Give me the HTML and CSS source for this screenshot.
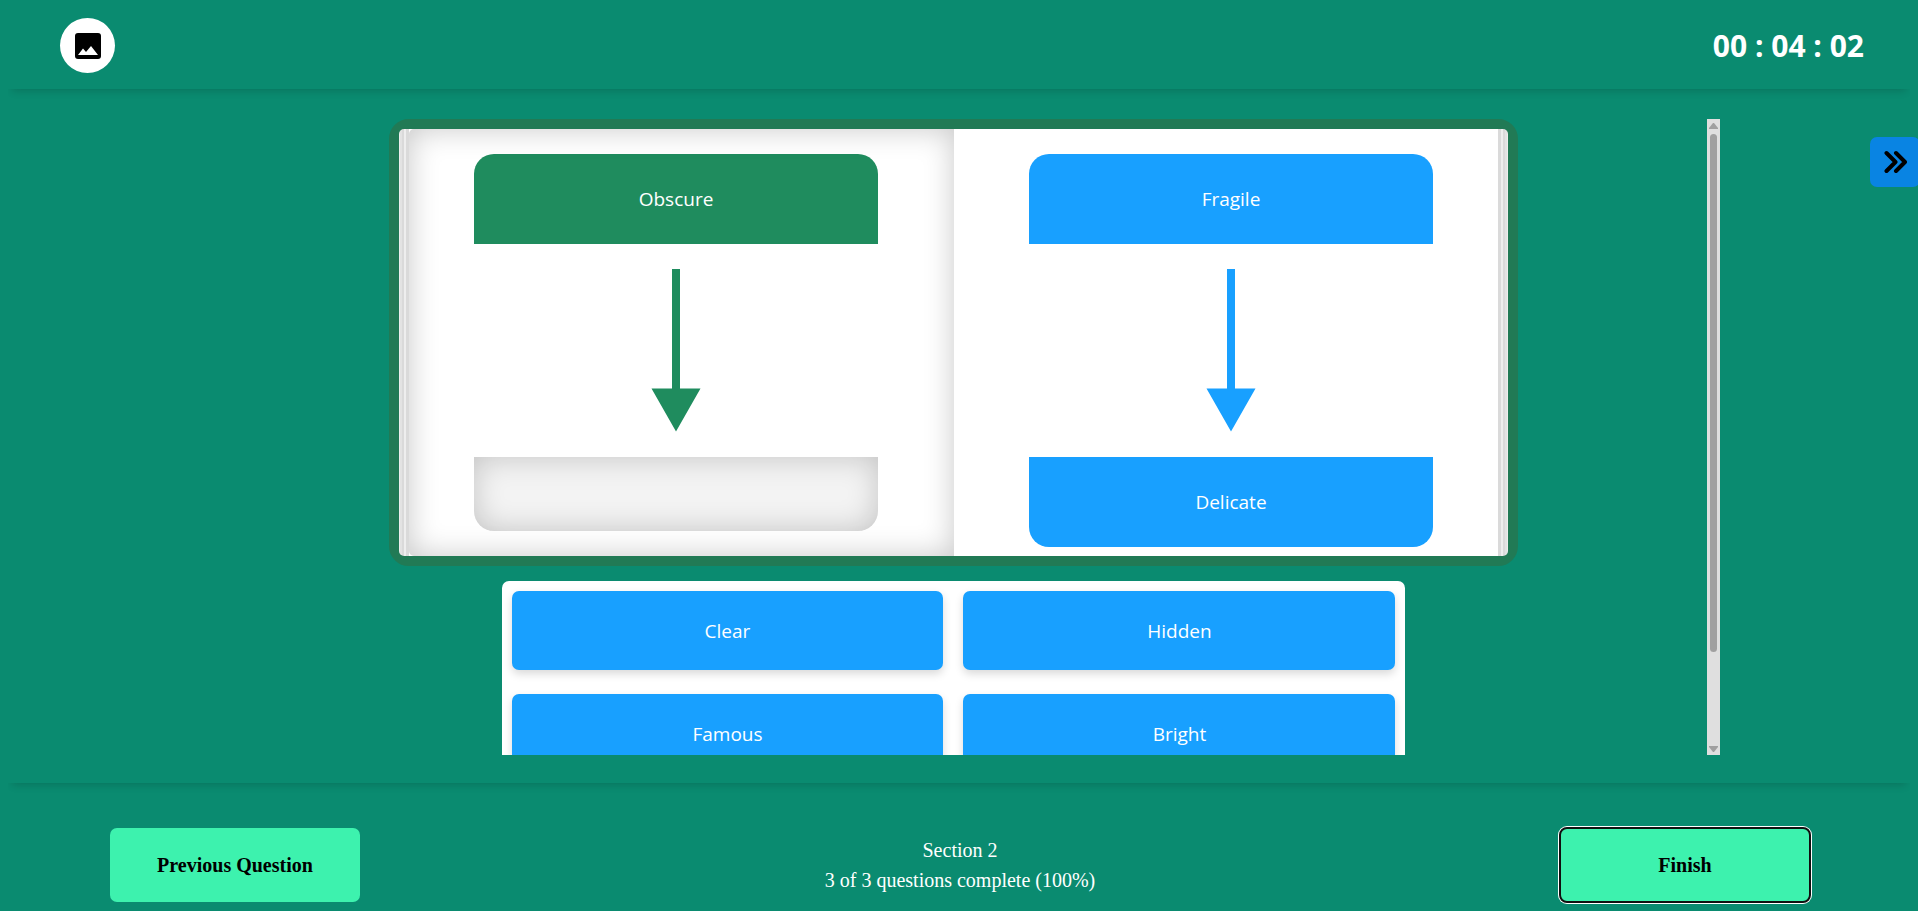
FILE: index.html
```html
<!DOCTYPE html>
<html lang="en">
<head>
<meta charset="utf-8">
<title>Section 2</title>
<link rel="stylesheet" href="styles.css">
</head>
<body>
<header class="topbar">
  <button class="avatar" type="button" aria-label="Image">
    <svg width="36" height="36" viewBox="0 0 36 36"><rect x="5" y="5" width="26" height="26" rx="3"/><path d="M8 27 13 20.500 16 24 21 18 28 27Z" fill="#fff"/></svg>
  </button>
  <div class="timer">00 : 04 : 02</div>
</header>

<main class="stage">
  <div class="scroller">
    <div class="content">
      <section class="book">
        <div class="page page-left">
          <div class="word word-top green">Obscure</div>
          <svg class="arrow arrow-green" width="50" height="163" viewBox="0 0 50 163"><path d="M21 0h8v119.500h20.500L25 162.500 .5 119.500H21Z"/></svg>
          <div class="word slot"></div>
        </div>
        <div class="page page-right">
          <div class="word word-top">Fragile</div>
          <svg class="arrow" width="50" height="163" viewBox="0 0 50 163"><path d="M21 0h8v119.500h20.500L25 162.500 .5 119.500H21Z"/></svg>
          <div class="word word-bottom">Delicate</div>
        </div>
      </section>
      <section class="options">
        <button class="option" type="button">Clear</button>
        <button class="option" type="button">Hidden</button>
        <button class="option" type="button">Famous</button>
        <button class="option" type="button">Bright</button>
      </section>
    </div>
    <div class="scrollbar" aria-hidden="true">
      <svg width="13" height="15" viewBox="0 0 13 15"><path d="M6 4h1l4 5v1H2V9Z"/></svg>
      <div class="track"><div class="thumb"></div></div>
      <svg width="13" height="15" viewBox="0 0 13 15"><path d="M2 6h9v1l-4 5H6L2 7Z"/></svg>
    </div>
  </div>
</main>

<button class="drawer" type="button" aria-label="Open panel">
  <svg width="24" height="24" viewBox="0 0 24 24"><path d="M3.500 3 12.500 12 3.500 21M13 3 22 12 13 21"/></svg>
</button>

<footer class="footer">
  <button class="nav" type="button">Previous Question</button>
  <div class="progress">
    <p>Section 2</p>
    <p>3 of 3 questions complete (100%)</p>
  </div>
  <button class="nav focused" type="button">Finish</button>
</footer>
</body>
</html>
```
FILE: styles.css
```css
* { box-sizing: border-box; }

body {
  display: flex;
  flex-direction: column;
  min-height: 100vh;
  margin: 0 8px;
  background: #0a8b70;
  color: #fff;
  font-family: "Liberation Serif", "Times New Roman", serif;
  font-size: 20px;
}

button {
  border: 0;
  padding: 0;
  color: inherit;
  font: inherit;
  cursor: pointer;
}

.topbar {
  display: flex;
  align-items: center;
  justify-content: space-between;
  padding: 18px 46px 16px 52px;
  box-shadow: 0 6px 8px -4px rgba(0, 0, 0, .16);
}

.avatar {
  display: grid;
  place-items: center;
  width: 55px;
  height: 55px;
  border-radius: 50%;
  background: #fff;
}

.timer {
  font: bold 30px/40px "Open Sans", "Segoe UI", sans-serif;
}

.stage {
  display: flex;
  flex-direction: column;
  flex: 1;
  min-height: 0;
  padding: 30px 0 28px;
  box-shadow: 0 6px 8px -4px rgba(0, 0, 0, .16);
}

.scroller {
  display: flex;
  flex: 1 1 0;
  width: 80%;
  min-height: 0;
  margin: 0 auto;
  overflow: hidden;
}

.content {
  display: flex;
  flex: 1;
  flex-direction: column;
  align-items: center;
  gap: 15px;
  padding-left: 2px;
  font-family: "Open Sans", "Segoe UI", sans-serif;
  font-size: 19px;
}

.book {
  display: flex;
  flex-shrink: 0;
  width: 75%;
  border: 10px solid #217a55;
  border-radius: 20px;
  background: #217a55;
}

.page {
  display: flex;
  flex: 1;
  flex-direction: column;
  align-items: center;
  gap: 25px;
  padding: 25px 25px 9px;
}

.page-left {
  position: relative;
  border-radius: 5px 0 0 5px;
  background: linear-gradient(90deg, #eee 1px, #e3e3e3 1px 3px, #dadada 3px 5px, #eee 5px 7px, #dadada 7px 10px, transparent 10px), #fff;
}

.page-left::before {
  content: "";
  position: absolute;
  inset: 0 0 0 10px;
  border-radius: 5px 0 0 5px;
  box-shadow: inset 0 0 30px rgba(0, 0, 0, .22);
}

.page-right {
  border-radius: 0 5px 5px 0;
  background: linear-gradient(270deg, #eee 1px, #e3e3e3 1px 3px, #dadada 3px 5px, #eee 5px 7px, #dadada 7px 10px, transparent 10px), #fff;
}

.word {
  display: grid;
  place-items: center;
  width: 80%;
  height: 90px;
  background: #18a0ff;
}

.word-top { border-radius: 20px 20px 0 0; }
.word-bottom { border-radius: 0 0 20px 20px; }
.green { background: #1f8c5e; }

.slot {
  height: 74px;
  border-radius: 0 0 20px 20px;
  background: #f3f3f3;
  box-shadow: inset 0 0 30px rgba(0, 0, 0, .2);
}

.arrow { fill: #18a0ff; }
.arrow-green { fill: #1f8c5e; }

.options {
  display: grid;
  flex-shrink: 0;
  grid-template-columns: 1fr 1fr;
  gap: 24px 20px;
  width: 60%;
  padding: 10px 10px 24px;
  border-radius: 7px;
  background: #fff;
}

.option {
  height: 79px;
  border-radius: 7px;
  background: #18a0ff;
  box-shadow: 0 4px 8px rgba(0, 0, 0, .15);
}

.scrollbar {
  display: flex;
  flex-direction: column;
  width: 13px;
  background: #dfdfdf;
  fill: #a0a0a0;
}

.track {
  flex: 1;
  padding: 0 3px;
}

.thumb {
  height: 85.5%;
  border-radius: 4px;
  background: #a0a0a0;
}

.drawer {
  position: fixed;
  top: 137px;
  right: -2px;
  display: grid;
  place-items: center;
  width: 50px;
  height: 50px;
  border-radius: 7px;
  background: #0984e3;
}

.drawer svg {
  fill: none;
  stroke: #000;
  stroke-width: 4;
  stroke-linecap: round;
  stroke-linejoin: round;
}

.footer {
  display: flex;
  align-items: center;
  justify-content: space-between;
  padding: 45px 100px 9px 102px;
}

.nav {
  width: 250px;
  height: 74px;
  border-radius: 7px;
  background: #3df2ae;
  color: #000;
  font-weight: bold;
}

.focused {
  outline: 2px solid #101010;
  outline-offset: -1px;
  box-shadow: 0 0 0 2px #fff;
}

.progress {
  line-height: 30px;
  text-align: center;
}

.progress p { margin: 0; }
```
